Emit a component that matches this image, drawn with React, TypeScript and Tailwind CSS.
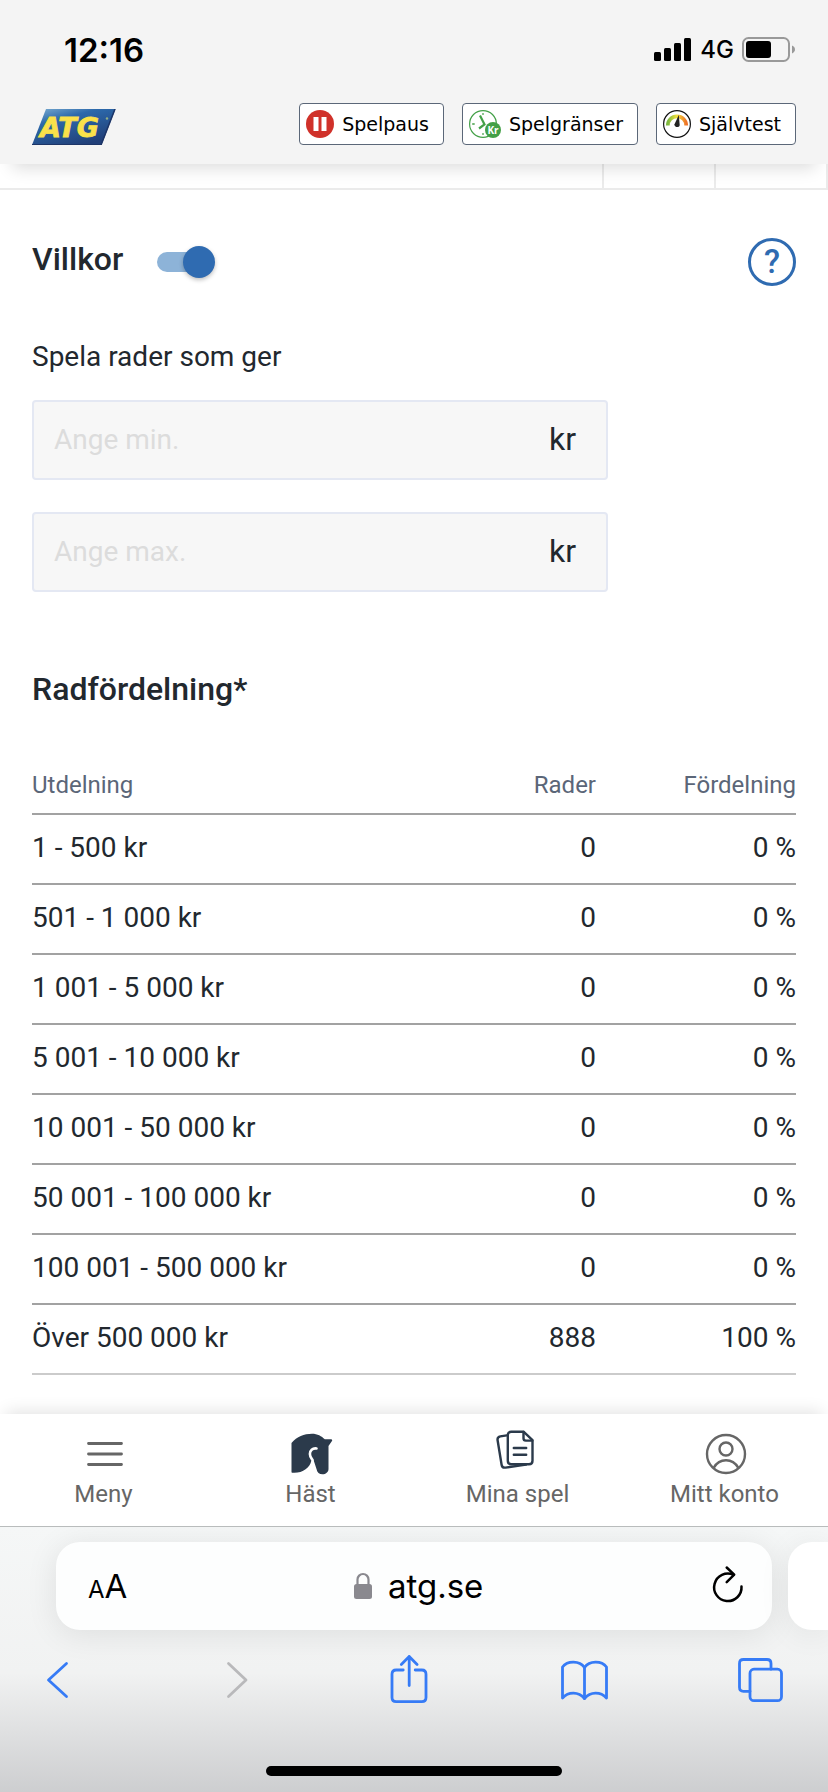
import { useState } from "react";
import type { ReactNode } from "react";

const payoutRows = [
	{ label: "1 - 500 kr", rows: "0", share: "0 %" },
	{ label: "501 - 1 000 kr", rows: "0", share: "0 %" },
	{ label: "1 001 - 5 000 kr", rows: "0", share: "0 %" },
	{ label: "5 001 - 10 000 kr", rows: "0", share: "0 %" },
	{ label: "10 001 - 50 000 kr", rows: "0", share: "0 %" },
	{ label: "50 001 - 100 000 kr", rows: "0", share: "0 %" },
	{ label: "100 001 - 500 000 kr", rows: "0", share: "0 %" },
	{ label: "Över 500 000 kr", rows: "888", share: "100 %" },
];

export default function App() {
	return (
		<div className="flex min-h-screen flex-col bg-white font-['Roboto',sans-serif] text-[#22282e]">
			<header className="relative z-10 bg-[#f4f4f4] pb-[19px] shadow-[0_16px_16px_-12px_rgba(0,0,0,0.14)]">
				<StatusBar />
				<SiteHeader />
			</header>

			<main className="flex-1">
				<div className="flex h-[26px] border-b-2 border-[#ebebeb]">
					<span className="flex-1 border-r-2 border-[#ebebeb]" />
					<span className="w-28 border-r-2 border-[#ebebeb]" />
					<span className="w-28 border-r-2 border-[#ebebeb]" />
				</div>

				<div className="px-8">
					<ConditionsForm />
					<PayoutTable />
				</div>
			</main>

			<BottomNav />
			<BrowserBar />
		</div>
	);
}

function StatusBar() {
	return (
		<div className="flex items-center justify-between pt-[30px] pr-8 pl-16 font-['Inter',sans-serif] text-black">
			<span className="text-[33px] leading-10 font-semibold">12:16</span>
			<div className="flex items-center gap-2">
				<svg width="38" height="24" viewBox="0 0 38 24" aria-hidden="true">
					<rect x="0" y="14" width="7" height="9" rx="1.5" />
					<rect x="10" y="10" width="7" height="13" rx="1.5" />
					<rect x="20" y="5" width="7" height="18" rx="1.5" />
					<rect x="30" y="0" width="7" height="23" rx="1.5" />
				</svg>
				<span className="text-2xl font-medium">4G</span>
				<svg width="54" height="26" viewBox="0 0 54 26" aria-hidden="true">
					<rect x="1" y="1" width="46" height="23" rx="5.5" fill="none" stroke="#999" strokeWidth="2" />
					<rect x="4" y="4" width="25" height="17" rx="3" />
					<path d="M50 8.5c1.8.8 3 2.200 3 4s-1.200 3.200-3 4z" fill="#999" />
				</svg>
			</div>
		</div>
	);
}

function SiteHeader() {
	return (
		<div className="mt-[33px] flex items-end justify-between px-8">
			<a href="#" aria-label="ATG">
				<AtgLogo />
			</a>
			<div className="flex gap-[18px]">
				<HeaderLink label="Spelpaus">
					<svg width="28" height="28" viewBox="0 0 28 28" aria-hidden="true">
						<circle cx="14" cy="14" r="14" fill="#d0312a" />
						<path d="M7.500 7h5v14h-5zM15.500 7h5v14h-5z" fill="#fff" />
					</svg>
				</HeaderLink>
				<HeaderLink label="Spelgränser">
					<svg width="32" height="28" viewBox="0 0 32 28" aria-hidden="true">
						<circle cx="14" cy="14" r="13.400" fill="#fff" stroke="#43a047" strokeWidth="1.200" />
						<path
							d="M14 3.200v1.500M14 23.300v1.500M3.200 14h2.500M22 14h2"
							stroke="#43a047"
							strokeWidth="1.600"
						/>
						<path d="M11 5.500l4.500 9-5.500 4" fill="none" stroke="#43a047" strokeWidth="2.200" />
						<circle cx="24" cy="20" r="8" fill="#43a047" />
						<text
							x="24"
							y="24"
							textAnchor="middle"
							fill="#fff"
							fontFamily="Open Sans, sans-serif"
							fontSize="10"
							fontWeight="700"
						>
							Kr
						</text>
					</svg>
				</HeaderLink>
				<HeaderLink label="Självtest">
					<svg width="28" height="28" viewBox="0 0 28 28" aria-hidden="true">
						<defs>
							<linearGradient id="gauge" x1="0" x2="1" y1="0" y2="0">
								<stop offset="0" stopColor="#7cb83f" />
								<stop offset="0.500" stopColor="#f5e13c" />
								<stop offset="1" stopColor="#ee7328" />
							</linearGradient>
						</defs>
						<circle cx="14" cy="14" r="13.400" fill="#fff" stroke="#111" strokeWidth="1.200" />
						<path d="M4.800 15.500a9.200 9.200 0 0 1 18.400 0" fill="none" stroke="url(#gauge)" strokeWidth="3.800" />
						<path d="M15.800 5l.9 10c0 3-5.800 2.600-5.200-.8z" fill="#222" />
					</svg>
				</HeaderLink>
			</div>
		</div>
	);
}

function AtgLogo() {
	return (
		<svg className="block" width="84" height="36" viewBox="0 0 84 36" aria-hidden="true">
			<defs>
				<linearGradient id="logo" x1="0" x2="0.600" y1="0" y2="1">
					<stop offset="0" stopColor="#7fb0d3" />
					<stop offset="0.350" stopColor="#2c69ab" />
					<stop offset="1" stopColor="#213f78" />
				</linearGradient>
			</defs>
			<path d="M14 0h69.500L69.500 36H0z" fill="url(#logo)" />
			<path d="M83 0L69 36" stroke="#1d3567" strokeWidth="1.500" />
			<path d="M0 35.500h69.500" stroke="#1d3567" />
			<text
				x="8"
				y="28"
				fill="#fae14a"
				stroke="#fae14a"
				strokeWidth="0.800"
				fontFamily="DejaVu Sans, sans-serif"
				fontSize="27"
				fontStyle="italic"
				fontWeight="700"
			>
				ATG
			</text>
			<circle cx="75" cy="9.500" r="1.200" fill="#8fae86" />
		</svg>
	);
}

function HeaderLink(props: { children: ReactNode; label: string }) {
	const { children, label } = props;

	return (
		<a
			href="#"
			className="flex h-[42px] items-center gap-2 rounded border border-[#5b6778] bg-white pr-[14px]
				pl-[6px] font-['DejaVu_Sans',sans-serif] text-[19px] text-black"
		>
			{children}
			{label}
		</a>
	);
}

function ConditionsForm() {
	const [isEnabled, setIsEnabled] = useState(true);

	return (
		<form>
			<div className="flex items-start pt-12">
				<label htmlFor="conditions" className="text-[32px] leading-[42px] font-medium">
					Villkor
				</label>
				<input
					id="conditions"
					type="checkbox"
					role="switch"
					checked={isEnabled}
					onChange={(event) => setIsEnabled(event.target.checked)}
					className="relative mt-2 ml-[34px] h-8 w-[58px] appearance-none before:absolute before:top-[6px]
						before:left-0 before:h-5 before:w-12 before:rounded-full before:bg-gray-300 after:absolute
						after:top-0 after:left-0 after:size-8 after:rounded-full after:bg-gray-500
						after:shadow-[0_2px_4px_rgba(0,0,0,0.25)] checked:before:bg-[#8db3d8]
						checked:after:left-[26px] checked:after:bg-[#2f6bb1]"
				/>
				<button
					type="button"
					aria-label="Hjälp"
					className="ml-auto flex size-12 items-center justify-center rounded-full border-3
						border-[#2f6bb1] text-[33px] leading-10 font-medium text-[#2f6bb1]"
				>
					?
				</button>
			</div>

			<fieldset className="mt-[55px] flex max-w-[576px] flex-col gap-8">
				<legend className="mb-[27px] text-[28px] leading-8">Spela rader som ger</legend>
				<AmountField label="Ange min." />
				<AmountField label="Ange max." />
			</fieldset>
		</form>
	);
}

function AmountField(props: { label: string }) {
	const { label } = props;

	return (
		<label className="flex h-20 items-center rounded border-2 border-[#e4e8f3] bg-[#f7f7f7] pr-[30px] pl-5">
			<input
				type="text"
				inputMode="numeric"
				aria-label={label}
				placeholder={label}
				className="min-w-0 flex-1 bg-transparent text-[28px] leading-8 outline-none placeholder:text-[#dcdcdc]"
			/>
			<span className="pb-[2px] text-[32px] leading-10">kr</span>
		</label>
	);
}

function PayoutTable() {
	return (
		<section className="mt-[77px]">
			<h2 className="text-[32px] leading-10 font-medium">Radfördelning*</h2>
			<table className="mt-[60px] w-full border-separate border-spacing-0">
				<thead className="text-2xl/8 text-[#5b6678]">
					<tr>
						<th className="border-b-2 border-[#a2a2a2] pb-3 text-left font-normal">Utdelning</th>
						<th className="border-b-2 border-[#a2a2a2] pb-3 text-right font-normal">Rader</th>
						<th className="w-[200px] border-b-2 border-[#a2a2a2] pb-3 text-right font-normal">
							Fördelning
						</th>
					</tr>
				</thead>
				<tbody className="text-[28px] leading-8">
					{payoutRows.map((row) => (
						<tr key={row.label} className="group">
							<td className="border-b-2 border-[#a2a2a2] pt-[17px] pb-[19px] group-last:border-[#cbcbcb]">
								{row.label}
							</td>
							<td
								className="border-b-2 border-[#a2a2a2] pt-[17px] pb-[19px] text-right
									group-last:border-[#cbcbcb]"
							>
								{row.rows}
							</td>
							<td
								className="border-b-2 border-[#a2a2a2] pt-[17px] pb-[19px] text-right
									group-last:border-[#cbcbcb]"
							>
								{row.share}
							</td>
						</tr>
					))}
				</tbody>
			</table>
		</section>
	);
}

function BottomNav() {
	return (
		<nav
			className="relative z-10 grid h-[113px] grid-cols-4 border-b border-[#b9bcbc] bg-white pt-4
				shadow-[0_-8px_16px_-6px_rgba(0,0,0,0.12)]"
		>
			<NavItem label="Meny">
				<path d="M8.500 13.500h33M8.500 24h33M8.500 34.500h33" stroke="#666" strokeWidth="2.800" />
			</NavItem>
			<NavItem label="Häst">
				<path
					d="M4.500 13C10 6.500 17 3.700 25 3.700c5.500 0 9.500 2.300 12.800 5.600h6.200c1.500 0 1.500 1 .8 2L41.500 16v23
						c0 3.200-2.800 5.300-6 5.300s-5.500-1.800-6-5.300L26.400 29.500 24.300 30.700C23 38 15 43.500 5.500 42.700c-.7 0-1-.4-1-1z"
					fill="#2b3a4b"
				/>
				<path d="M29.500 18.500c-4-.6-6.700 2-6.600 5.500 0 3 1.500 4.500 2.600 6" fill="none" stroke="#fff" strokeWidth="2.600" />
			</NavItem>
			<NavItem label="Mina spel">
				<g fill="none" stroke="#2b3a4b" strokeWidth="2.400">
					<path d="M12.800 5.400 6.300 6.400C4.300 6.800 3.300 8.300 3.600 10.300l4 24.400c.3 2 1.800 3.200 3.900 2.900l20.500-3" />
					<path d="M29.500 1.700H17.300c-2.200 0-3.500 1.400-3.500 3.500v25.500c0 2.200 1.400 3.500 3.500 3.500h17.700c2.200 0 3.500-1.400 3.500-3.500V10.200z" />
					<path d="M29.500 2v6.300c0 1.600.8 2.300 2.300 2.300h6.500" />
					<path d="M19.800 18h12.400M19.800 24.700h12.400" />
				</g>
			</NavItem>
			<NavItem label="Mitt konto">
				<g fill="none" stroke="#666" strokeWidth="2.400">
					<circle cx="25" cy="24" r="19" />
					<circle cx="25" cy="19" r="6.500" />
					<path d="M12.800 37.700C15.500 33 20 30.300 25 30.300s9.500 2.700 12.200 7.400" />
				</g>
			</NavItem>
		</nav>
	);
}

function NavItem(props: { children: ReactNode; label: string }) {
	const { children, label } = props;

	return (
		<a href="#" className="flex flex-col items-center text-2xl/8 text-[#666]">
			<svg
				width="48"
				height="48"
				viewBox="0 0 48 48"
				strokeLinecap="round"
				strokeLinejoin="round"
				aria-hidden="true"
			>
				{children}
			</svg>
			{label}
		</a>
	);
}

function BrowserBar() {
	return (
		<footer
			className="bg-linear-to-b from-[#f5f7f7] via-[#f1f2f2] via-55% to-[#cdced0] pt-[15px] pb-4
				font-['Inter',sans-serif] text-black"
		>
			<div className="flex gap-4 pl-14">
				<div
					className="flex h-[88px] flex-1 items-center justify-between rounded-3xl bg-[#fdfefe] pr-[26px]
						pl-8 shadow-[0_4px_32px_rgba(0,0,0,0.09)]"
				>
					<button type="button" aria-label="Sidinställningar" className="flex items-baseline">
						<span className="text-2xl/6">A</span>
						<span className="text-[33px] leading-10">A</span>
					</button>
					<button type="button" className="flex items-center gap-4 text-[33px] leading-10">
						<svg width="18" height="28" viewBox="0 0 18 28" aria-hidden="true">
							<path d="M3.500 13V7.500a5.500 5.500 0 0 1 11 0V13" fill="none" stroke="#8a898f" strokeWidth="2.200" />
							<rect x="0" y="12" width="18" height="15" rx="2.500" fill="#8a898f" />
						</svg>
						atg.se
					</button>
					<button type="button" aria-label="Ladda om">
						<svg
							width="36"
							height="44"
							viewBox="0 0 36 44"
							fill="none"
							stroke="#000"
							strokeWidth="2.500"
							strokeLinecap="round"
							strokeLinejoin="round"
							aria-hidden="true"
						>
							<path d="M31.500 22.500a13.700 13.700 0 1 1-8-11.600" />
							<path d="M16.700 3.500l7.500 7.200-7.500 7.400" />
						</svg>
					</button>
				</div>
				<div className="w-10 rounded-l-3xl bg-white shadow-[0_4px_32px_rgba(0,0,0,0.07)]" />
			</div>

			<div className="mt-6 flex justify-between pr-11 pl-8 text-[#367bf6]">
				<ToolbarButton label="Bakåt">
					<path d="M34.500 9.500 16.500 26l18 16.500" />
				</ToolbarButton>
				<ToolbarButton label="Framåt" disabled={true}>
					<path d="M20.500 9.500 38 26 20.500 42.500" />
				</ToolbarButton>
				<ToolbarButton label="Dela">
					<path d="M19.200 16h-7c-2.800 0-4.200 1.400-4.200 4.200v23.300c0 2.800 1.400 4.200 4.200 4.200h25.600c2.800 0 4.200-1.400 4.200-4.200V20.200c0-2.800-1.400-4.200-4.200-4.200h-6.600" />
					<path d="M25.200 31.500V2.500M17.300 10.400l7.900-7.900 7.900 7.900" />
				</ToolbarButton>
				<ToolbarButton label="Bokmärken">
					<path d="M24.500 13.500C19.500 6.500 7.500 6.500 2.500 13v31c6-6.500 16-6.500 22 .5 6-7 16-7 22-.5V13c-5-6.500-17-6.500-22 .5z" />
					<path d="M24.500 13.500v31" />
				</ToolbarButton>
				<ToolbarButton label="Flikar">
					<rect x="14" y="15.200" width="31.500" height="31.500" rx="4" />
					<path d="M14 37.300H7.500c-2.700 0-4-1.300-4-4V9.500c0-2.700 1.300-4 4-4H31c2.700 0 4 1.300 4 4v5.700" />
				</ToolbarButton>
			</div>

			<div className="mx-auto mt-[60px] h-[10px] w-[296px] rounded-full bg-black" />
		</footer>
	);
}

function ToolbarButton(props: { children: ReactNode; disabled?: boolean; label: string }) {
	const { children, disabled, label } = props;

	return (
		<button type="button" aria-label={label} disabled={disabled} className="disabled:text-[#b9b9bb]">
			<svg
				width="48"
				height="52"
				viewBox="0 0 48 52"
				fill="none"
				stroke="currentColor"
				strokeWidth="2.800"
				strokeLinecap="round"
				strokeLinejoin="round"
				aria-hidden="true"
			>
				{children}
			</svg>
		</button>
	);
}
